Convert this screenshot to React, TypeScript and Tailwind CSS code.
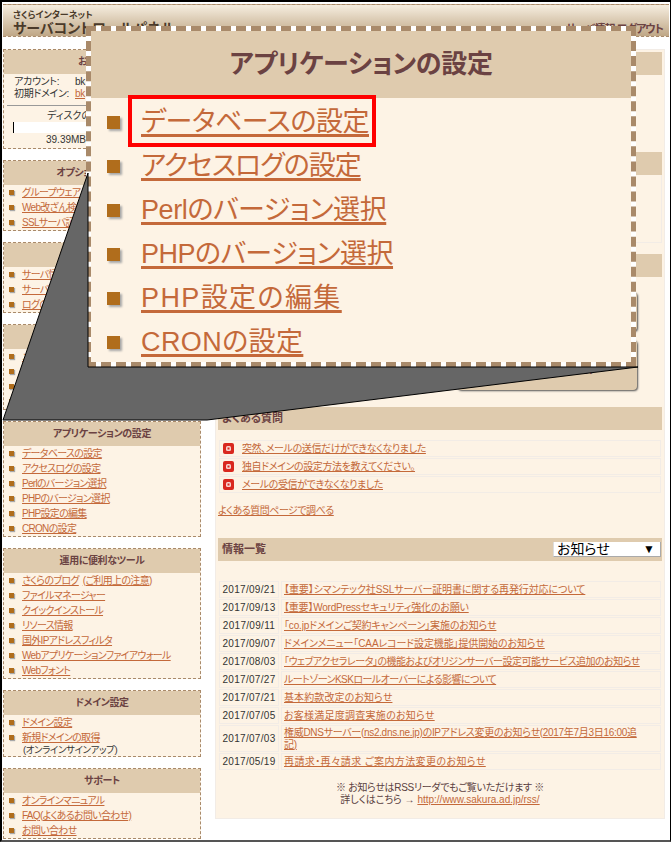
const FONT = "font-['Liberation_Sans','Noto_Sans_CJK_JP',sans-serif] [font-feature-settings:'palt']";

type Item = { text: string; note?: string; sub?: string };

const panels: { title: string; h?: string; items: Item[] }[] = [
  { title: "オプション機能の設定", items: [{ text: "グループウェア" }, { text: "Web改ざん検知" }, { text: "SSLサーバ証明書" }] },
  { title: "サーバに関する設定", items: [{ text: "サーバ情報" }, { text: "サーバ設定" }, { text: "ログの確認" }] },
  { title: "メールの設定", items: [{ text: "メールアドレス" }, { text: "メールの設定" }, { text: "メーリングリスト" }, { text: "メールフィルタ" }] },
  { title: "アプリケーションの設定", items: [{ text: "データベースの設定" }, { text: "アクセスログの設定" }, { text: "Perlのバージョン選択" }, { text: "PHPのバージョン選択" }, { text: "PHP設定の編集" }, { text: "CRONの設定" }] },
  { title: "運用に便利なツール", items: [{ text: "さくらのブログ", note: "(ご利用上の注意)" }, { text: "ファイルマネージャー" }, { text: "クイックインストール" }, { text: "リソース情報" }, { text: "国外IPアドレスフィルタ" }, { text: "Webアプリケーションファイアウォール" }, { text: "Webフォント" }] },
  { title: "ドメイン設定", items: [{ text: "ドメイン設定" }, { text: "新規ドメインの取得", sub: "(オンラインサインアップ)" }] },
  { title: "サポート", items: [{ text: "オンラインマニュアル" }, { text: "FAQ(よくあるお問い合わせ)" }, { text: "お問い合わせ" }] },
];

const faqs = ["突然、メールの送信だけができなくなりました", "独自ドメインの設定方法を教えてください。", "メールの受信ができなくなりました"];

const news: [string, string, string][] = [
  ["2017/09/21", "【重要】シマンテック社SSLサーバー証明書に関する再発行対応について", "tracking-[-0.12px]"],
  ["2017/09/13", "【重要】WordPressセキュリティ強化のお願い", "tracking-[-0.2px]"],
  ["2017/09/11", "「co.jpドメインご契約キャンペーン」実施のお知らせ", "tracking-[-0.15px]"],
  ["2017/09/07", "ドメインメニュー「CAAレコード設定機能」提供開始のお知らせ", "tracking-[-0.12px]"],
  ["2017/08/03", "「ウェブアクセラレータ」の機能およびオリジンサーバー設定可能サービス追加のお知らせ", "tracking-[-0.5px]"],
  ["2017/07/27", "ルートゾーンKSKロールオーバーによる影響について", "tracking-[-0.55px]"],
  ["2017/07/21", "基本約款改定のお知らせ", "tracking-[0.1px]"],
  ["2017/07/05", "お客様満足度調査実施のお知らせ", "tracking-[0.25px]"],
  ["2017/07/03", "権威DNSサーバー(ns2.dns.ne.jp)のIPアドレス変更のお知らせ(2017年7月3日16:00追\n記)", "tracking-[-0.3px]"],
  ["2017/05/19", "再請求・再々請求 ご案内方法変更のお知らせ", "tracking-[0.4px]"],
];

const bigItems: [string, string][] = [
  ["データベースの設定", "tracking-[-0.5px]"],
  ["アクセスログの設定", "tracking-[-1px]"],
  ["Perlのバージョン選択", "tracking-[-0.4px]"],
  ["PHPのバージョン選択", "tracking-[-0.5px]"],
  ["PHP設定の編集", "tracking-[1.4px]"],
  ["CRONの設定", "tracking-[0.4px]"],
];

function Bullet() {
  return <span className="block w-[5px] h-[5px] shrink-0 bg-[#b06d1c] shadow-[1px_1px_1px_#a8a8a8]" />;
}

function PanelHead({ title }: { title: string }) {
  return (
    <div className="h-[24px] pb-[2px] bg-[#dfcbae] flex items-center justify-center text-[10px] tracking-[-0.4px] font-bold text-[#6b4242]">
      {title}
    </div>
  );
}

function Panel({ title, items }: { title: string; items: Item[] }) {
  return (
    <section className="border border-dashed border-[#a98a6a] bg-[#fdf3e5]">
      <PanelHead title={title} />
      <ul>
        {items.map((it) => (
          <li key={it.text}>
            <div className="h-[15px] pb-[1px] flex items-center pl-[5px] gap-[8px]">
              <Bullet />
              <span className="text-[10px] leading-[13px] tracking-[-0.7px] whitespace-nowrap">
                <a className="text-[#c4693a] underline">{it.text}</a>
                {it.note && <a className="text-[#c4693a] underline ml-1">{it.note}</a>}
              </span>
            </div>
            {it.sub && <div className="h-[11px] pl-[19px] text-[9.5px] leading-[10px] tracking-[-0.4px] text-[#333]">{it.sub}</div>}
          </li>
        ))}
      </ul>
    </section>
  );
}

function Bar({ children }: { children?: React.ReactNode }) {
  return (
    <div className="h-[23px] bg-[#dfcbae] flex items-center justify-between pl-[4px] pr-[1px] text-[11px] font-bold text-[#6b4242]">
      {children}
    </div>
  );
}

function FaqIcon() {
  return (
    <svg width="11" height="11" viewBox="0 0 11 11" className="shrink-0">
      <rect x="0" y="0" width="11" height="11" rx="2" fill="#d9281e" />
      <rect x="3" y="3" width="5" height="5" rx="1.5" fill="#f7d5d0" />
      <rect x="4.5" y="4.5" width="2" height="2" fill="#d9281e" />
    </svg>
  );
}

export default function App() {
  return (
    <div className={`${FONT} relative w-[671px] h-[842px] overflow-hidden bg-white border-l-2 border-t-2 border-r border-b-2 border-l-black border-t-black border-r-black border-b-[#555] pl-[1px] pt-[2px]`}>
      <header className="w-[666px] h-[33px] border-t border-b border-dashed border-[#a98a6a] bg-gradient-to-b from-[#f6eee0] to-[#bfa786] flex justify-between items-end pl-[10px] pr-[6px] pb-[1px]">
        <div className="text-[#4a3a2a] font-bold leading-none">
          <div className="text-[9px] leading-[7px]">さくらインターネット</div>
          <div className="text-[14px] leading-[14px] pt-[2px]">サーバコントロールパネル</div>
        </div>
        <div className="text-[11px] tracking-[-1px] font-bold text-[#6b4242] leading-[12px]">サーバ情報 ログアウト</div>
      </header>

      <div className="flex gap-[14px] mt-[12px] items-start">
        <aside className="w-[198px] shrink-0 flex flex-col gap-[11px]">
          <section className="h-[100px] border border-dashed border-[#a98a6a] bg-[#fdf3e5]">
            <PanelHead title="お客様情報" />
            <div className="text-[10px] text-[#333] px-[10px] pt-[2px] leading-[12px] tracking-[-0.3px]">
              <div className="flex h-[12px]"><span className="w-[61px]">アカウント:</span><span>bk</span></div>
              <div className="flex h-[12px]"><span className="w-[61px]">初期ドメイン:</span><a className="text-[#c4693a] underline">bk</a></div>
            </div>
            <div className="h-px bg-[#999] mx-[3px] mt-[5px]" />
            <div className="text-[10px] text-[#333] leading-[12px] mt-[4px] pl-[43px]">ディスクの使用量</div>
            <div className="h-[11px] mx-[9px] bg-white border-l border-black" />
            <div className="text-[10px] text-[#333] leading-[11px] pl-[42px] mt-[1px]">39.39MB</div>
          </section>
          {panels.map((p) => <Panel key={p.title} title={p.title} items={p.items} />)}
        </aside>

        <main className="w-[450px] h-[770px] border border-[#f2ece6] bg-[#fdf3e5] px-[2px] pt-[2px] text-[10px]">
          <Bar />
          <div className="mt-[77px]"><Bar /></div>
          <div className="h-[68px] border border-[#f2ece6] border-t-0" />
          <div className="mt-[11px]"><Bar /></div>
          <div className="mt-[15px] flex flex-col items-end pr-[25px] gap-[9px]">
            <div className="w-[180px] h-[39px] bg-[#dfcbae] rounded-[4px] shadow-[1px_1px_2px_#555]" />
            <div className="w-[180px] h-[50px] bg-[#dfcbae] rounded-[4px] shadow-[1px_1px_2px_#555] flex items-center justify-end pr-[42px] pt-[10px] text-[10px] font-bold text-[#6b4242]">インストール</div>
          </div>
          <div className="mt-[17px]"><Bar>よくある質問</Bar></div>
          <ul className="mt-[10px] flex flex-col gap-[1px] px-[1px]">
            {faqs.map((f) => (
              <li key={f} className="h-[17px] border border-[#f2ece6] flex items-center pl-[3px] gap-[8px]">
                <FaqIcon />
                <a className="text-[#c4693a] underline whitespace-nowrap tracking-[-0.4px]">{f}</a>
              </li>
            ))}
          </ul>
          <div className="mt-[11px] h-[13px] leading-[13px]">
            <a className="text-[#c4693a] underline tracking-[-0.5px]">よくある質問ページで調べる</a>
          </div>
          <div className="mt-[21px]">
            <Bar>
              <span>情報一覧</span>
              <div className="w-[108px] h-[15px] bg-white border-r border-b border-[#aaa] border-l border-l-[#ddd] flex items-center justify-between pl-[3px] pr-[5px] text-[14px] font-normal text-black">
                <span className="leading-[15px]">お知らせ</span>
                <span className="text-[12px] leading-none">▼</span>
              </div>
            </Bar>
          </div>
          <div className="mt-[20px] flex flex-col gap-[1px] px-[1px]">
            {news.map(([d, t, tr]) => (
              <div key={d} className="flex gap-[2px]">
                <div className={`w-[60px] border border-[#f2ece6] flex items-center justify-center text-[#333] tracking-[0.3px] ${d === "2017/07/03" ? "h-[27px]" : "h-[17px]"}`}>{d}</div>
                <div className="flex-1 border border-[#f2ece6] flex items-center pl-[2px] leading-[12px]">
                  <a className={`text-[#c4693a] underline whitespace-pre-line ${tr}`}>{t}</a>
                </div>
              </div>
            ))}
          </div>
          <div className="mt-[12px] text-center text-[#5a4040] leading-[12px]">
            <div className="tracking-[-0.3px]">※ お知らせはRSSリーダでもご覧いただけます ※</div>
            <div>詳しくはこちら → <a className="text-[#c4693a] underline">http://www.sakura.ad.jp/rss/</a></div>
          </div>
        </main>
      </div>

      {/* magnified callout over the page */}
      <div className="absolute left-[84px] top-[24px] w-[550px] h-[341px] border-[5px] border-dashed border-[#a98a6a] bg-white">
        <div className="h-full bg-[#fdf3e5]">
          <div className="h-[67px] bg-[#dfcbae] flex items-center justify-center text-[26px] tracking-[-0.3px] font-bold text-[#6b4242]">アプリケーションの設定</div>
          <ul className="pt-[2px]">
            {bigItems.map(([t, tr]) => (
              <li key={t} className="h-[44px] flex items-center pl-[16px] gap-[21px]">
                <span className="block w-[13px] h-[13px] bg-[#b06d1c] shadow-[2px_2px_2px_#a8a8a8]" />
                <a className={`text-[27px] leading-[38px] text-[#c4693a] underline decoration-[3px] underline-offset-[3px] whitespace-nowrap ${tr}`}>{t}</a>
              </li>
            ))}
          </ul>
        </div>
      </div>
      <svg className="absolute left-[-2px] top-[-2px] pointer-events-none" width="671" height="842" viewBox="0 0 671 842">
        <polygon points="3,420 88,173 88,367 638,367 207,420" fill="#666666" stroke="#000000" strokeWidth="1" />
      </svg>
      <div className="absolute left-[126px] top-[93px] w-[248px] h-[52px] border-[4px] border-[#ff0000]" />
    </div>
  );
}
